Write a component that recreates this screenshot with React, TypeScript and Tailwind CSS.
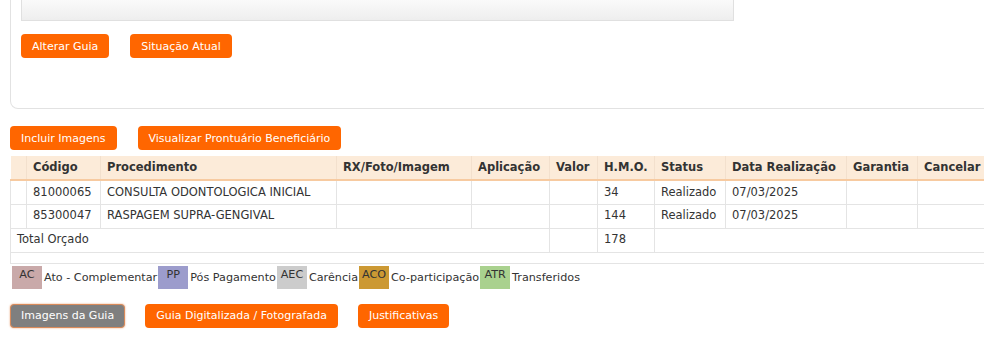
import React from 'react';

const font = { fontFamily: '"DejaVu Sans", Verdana, sans-serif' };

const OrangeButton: React.FC<{ label: string }> = ({ label }) => (
    <button className="h-[24px] px-[11px] rounded-[4px] bg-[#ff6600] text-white text-[11px] leading-none whitespace-nowrap">
        {label}
    </button>
);

const headers = [
    "", "Código", "Procedimento", "RX/Foto/Imagem", "Aplicação", "Valor",
    "H.M.O.", "Status", "Data Realização", "Garantia", "Cancelar",
];

const widths = [16, 74, 236, 135, 78, 48, 57, 71, 121, 71, 80];

const rows = [
    { codigo: "81000065", proc: "CONSULTA ODONTOLOGICA INICIAL", hmo: "34", status: "Realizado", data: "07/03/2025" },
    { codigo: "85300047", proc: "RASPAGEM SUPRA-GENGIVAL", hmo: "144", status: "Realizado", data: "07/03/2025" },
];

const legend = [
    { sigla: "AC", label: "Ato - Complementar", color: "bg-[#c9a9a9]" },
    { sigla: "PP", label: "Pós Pagamento", color: "bg-[#9c9ccc]" },
    { sigla: "AEC", label: "Carência", color: "bg-[#cccccc]" },
    { sigla: "ACO", label: "Co-participação", color: "bg-[#cc9933]" },
    { sigla: "ATR", label: "Transferidos", color: "bg-[#a9d18e]" },
];

const td = "border border-[#e4e4e4] px-[6px] h-[24px] whitespace-nowrap";

export default function App() {
    return (
        <div className="w-[984px] h-[359px] overflow-hidden bg-white text-[#333333] text-[11px]" style={font}>
            {/* painel superior */}
            <div className="ml-[10px] w-[990px] border border-t-0 border-[#e2e2e2] rounded-b-[8px] pl-[10px] pb-[50px]">
                <div className="w-[713px] h-[21px] border border-t-0 border-[#e0e0e0] bg-gradient-to-b from-[#fafafa] to-[#eeeeee]" />
                <div className="flex gap-[21px] mt-[13px]">
                    <OrangeButton label="Alterar Guia" />
                    <OrangeButton label="Situação Atual" />
                </div>
            </div>

            <div className="pl-[10px] mt-[17px]">
                <div className="flex gap-[21px]">
                    <OrangeButton label="Incluir Imagens" />
                    <OrangeButton label="Visualizar Prontuário Beneficiário" />
                </div>

                <table className="mt-[6px] table-fixed border-collapse w-[987px] text-left text-[11.5px]">
                    <colgroup>
                        {widths.map((w, i) => (
                            <col key={i} style={{ width: w }} />
                        ))}
                    </colgroup>
                    <thead>
                        <tr className="bg-[#fcebd9] border-b-2 border-[#f7caa0]">
                            {headers.map((h, i) => (
                                <th key={i} className="border-r border-[#f3e0cd] px-[6px] h-[24px] font-bold whitespace-nowrap">
                                    {h}
                                </th>
                            ))}
                        </tr>
                    </thead>
                    <tbody>
                        {rows.map((r) => (
                            <tr key={r.codigo}>
                                <td className={td}></td>
                                <td className={td}>{r.codigo}</td>
                                <td className={td}>{r.proc}</td>
                                <td className={td}></td>
                                <td className={td}></td>
                                <td className={td}></td>
                                <td className={td}>{r.hmo}</td>
                                <td className={td}>{r.status}</td>
                                <td className={td}>{r.data}</td>
                                <td className={td}></td>
                                <td className={td}></td>
                            </tr>
                        ))}
                        <tr>
                            <td colSpan={5} className={td}>Total Orçado</td>
                            <td className={td}></td>
                            <td className={td}>178</td>
                            <td colSpan={4} className={td}></td>
                        </tr>
                        <tr>
                            <td colSpan={11} className="border border-[#e4e4e4] h-[11px]"></td>
                        </tr>
                    </tbody>
                </table>

                <div className="flex items-center mt-[2px] ml-[2px] h-[23px] text-[11.2px]">
                    {legend.map((l) => (
                        <React.Fragment key={l.sigla}>
                            <span className={`${l.color} w-[30px] h-[23px] pt-[3px] text-center leading-none`}>{l.sigla}</span>
                            <span className="ml-[2px] mr-[1px] pt-[2px]">{l.label}</span>
                        </React.Fragment>
                    ))}
                </div>

                <div className="flex gap-[20px] mt-[15px]">
                    <button className="h-[24px] px-[10px] rounded-[4px] bg-[#7f7f7f] border border-[#d98a5a] shadow-[0_0_2px_#e9a070] text-white text-[11px] leading-none whitespace-nowrap">
                        Imagens da Guia
                    </button>
                    <OrangeButton label="Guia Digitalizada / Fotografada" />
                    <OrangeButton label="Justificativas" />
                </div>
            </div>
        </div>
    );
}
